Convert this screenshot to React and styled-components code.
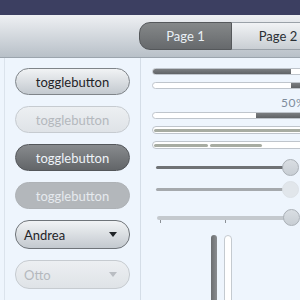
import React from "react";
import styled, { createGlobalStyle, css } from "styled-components";

const Global = createGlobalStyle`
  html, body { margin: 0; padding: 0; }
  body {
    background: #eef5fd;
    font-family: Lato, "Open Sans", sans-serif;
    overflow: hidden;
    width: 300px;
    height: 300px;
  }
`;

const Page = styled.div`
  width: 300px;
  height: 300px;
  overflow: hidden;
  display: flex;
  flex-direction: column;
`;

const TopBar = styled.div`
  height: 15px;
  flex: none;
  background: #3c3f61;
`;

const Header = styled.div`
  height: 43px;
  flex: none;
  box-sizing: border-box;
  background: linear-gradient(#eef0f3, #b8c0c8);
  border-bottom: 1px solid #9ba4ad;
  padding: 7px 0 0 139px;
  display: flex;
`;

const Tab = styled.div`
  width: 93px;
  height: 28px;
  flex: none;
  box-sizing: border-box;
  display: flex;
  align-items: center;
  justify-content: center;
  font-size: 13px;
  ${(p) =>
    p.$active
      ? css`
          background: linear-gradient(#858889, #66696c);
          color: #e9f0f6;
          border: 1px solid #55585b;
          border-radius: 11px 0 0 11px;
        `
      : css`
          background: linear-gradient(#f1f3f5, #c9ced3);
          color: #2a2f35;
          border: 1px solid #9aa1a8;
          border-left: none;
        `}
`;

const Main = styled.div`
  flex: 1;
  display: flex;
  padding-left: 4px;
  min-height: 0;
`;

const LeftPane = styled.div`
  width: 137px;
  flex: none;
  box-sizing: border-box;
  border-left: 1px solid #dbe3ec;
  border-right: 1px solid #d4dde7;
  padding: 10px 0 0 10px;
  display: flex;
  flex-direction: column;
  gap: 11px;
`;

const ToggleBtn = styled.div`
  width: 115px;
  height: 27px;
  flex: none;
  box-sizing: border-box;
  border-radius: 14px;
  display: flex;
  align-items: center;
  justify-content: center;
  font-size: 13px;
  ${(p) =>
    p.$checked
      ? p.$disabled
        ? css`
            background: #b3b7bb;
            border: 1px solid #aeb2b6;
            color: #e6eaee;
          `
        : css`
            background: linear-gradient(#888b8e, #626568);
            border: 1px solid #53565a;
            color: #eef3f8;
          `
      : p.$disabled
      ? css`
          background: linear-gradient(#eceff2, #dfe3e7);
          border: 1px solid #c6cbd0;
          color: #b4b8bd;
        `
      : css`
          background: linear-gradient(#f1f3f5, #c3c9cf);
          border: 1px solid #7f8489;
          color: #1f2327;
        `}
`;

const Combo = styled.div`
  width: 115px;
  height: 29px;
  flex: none;
  box-sizing: border-box;
  border-radius: 14px;
  display: flex;
  align-items: center;
  justify-content: space-between;
  padding: 0 12px 0 8px;
  font-size: 13px;
  ${(p) =>
    p.$disabled
      ? css`
          background: linear-gradient(#eceff2, #dfe3e7);
          border: 1px solid #c6cbd0;
          color: #b4b8bd;
        `
      : css`
          background: linear-gradient(#f1f3f5, #c3c9cf);
          border: 1px solid #6f7479;
          color: #1f2327;
        `}
`;

const Arrow = styled.span`
  width: 0;
  height: 0;
  border-left: 4.5px solid transparent;
  border-right: 4.5px solid transparent;
  border-top: 5px solid ${(p) => (p.$disabled ? "#b9bdc2" : "#1f2327")};
`;

const RightPane = styled.div`
  flex: 1;
  padding: 10px 0 0 11px;
  display: flex;
  flex-direction: column;
  min-width: 0;
`;

const Bar = styled.div`
  width: 208px;
  height: 7px;
  flex: none;
  box-sizing: border-box;
  border: 1px solid #bfc5cc;
  border-radius: 4px;
  background: #ffffff;
  overflow: hidden;
  display: flex;
  justify-content: ${(p) => (p.$inverted ? "flex-end" : "flex-start")};
  margin-top: ${(p) => p.$mt}px;
`;

const Fill = styled.div`
  height: 100%;
  background: linear-gradient(#7b7e81, #606366);
`;

const Pulse = styled.div`
  width: 208px;
  height: 8px;
  flex: none;
  box-sizing: border-box;
  border: 1px solid #bfc5cc;
  border-radius: 4px;
  background: #ffffff;
  padding: 1.5px 1px;
  display: flex;
  gap: 2px;
  margin-top: ${(p) => p.$mt}px;
`;

const PulseBlock = styled.div`
  height: 3px;
  border-radius: 2px;
  background: #a7aca2;
  flex: none;
`;

const Percent = styled.div`
  font-size: 12px;
  color: #7e8c9b;
  height: 12px;
  line-height: 12px;
  margin: 8px 0 0 129px;
  letter-spacing: 0.5px;
  white-space: nowrap;
`;

const Slider = styled.div`
  position: relative;
  width: 143px;
  height: 17px;
  margin-left: ${(p) => p.$ml ?? 4}px;
  margin-top: ${(p) => p.$mt}px;
  display: flex;
  align-items: center;
  flex: none;
`;

const Track = styled.div`
  flex: 1;
  height: ${(p) => p.$h}px;
  background: ${(p) => p.$color};
  border-radius: 2px;
  margin-right: 8px;
`;

const Knob = styled.div`
  position: absolute;
  right: 0;
  top: 0;
  width: 17px;
  height: 17px;
  box-sizing: border-box;
  border-radius: 50%;
  background: ${(p) => (p.$disabled ? "#e1e6eb" : "linear-gradient(#d9dee3, #c8ced4)")};
  border: 1px solid ${(p) => (p.$disabled ? "#dde2e7" : "#aab0b6")};
`;

const Ticks = styled.div`
  display: flex;
  gap: 64px;
  margin: -6px 0 0 8px;
  height: 4px;
  flex: none;
`;

const Tick = styled.div`
  width: 1px;
  height: 3px;
  background: #8b9096;
`;

const VertRow = styled.div`
  display: flex;
  gap: 7px;
  margin: 11px 0 0 59px;
  flex: 1;
`;

const VBar = styled.div`
  width: ${(p) => (p.$filled ? 6 : 8)}px;
  height: 80px;
  box-sizing: border-box;
  border-radius: 4px;
  ${(p) =>
    p.$filled
      ? css`
          background: linear-gradient(90deg, #6b6e71, #8a8d90);
        `
      : css`
          background: #ffffff;
          border: 1px solid #c4cad0;
        `}
`;

export default function App() {
  return (
    <Page>
      <Global />
      <TopBar />
      <Header>
        <Tab $active>Page 1</Tab>
        <Tab>Page 2</Tab>
      </Header>
      <Main>
        <LeftPane>
          <ToggleBtn>togglebutton</ToggleBtn>
          <ToggleBtn $disabled>togglebutton</ToggleBtn>
          <ToggleBtn $checked>togglebutton</ToggleBtn>
          <ToggleBtn $checked $disabled>togglebutton</ToggleBtn>
          <Combo>
            Andrea
            <Arrow />
          </Combo>
          <Combo $disabled>
            Otto
            <Arrow $disabled />
          </Combo>
        </LeftPane>
        <RightPane>
          <Bar $mt={0}>
            <Fill style={{ width: "67%" }} />
          </Bar>
          <Bar $mt={7} $inverted>
            <Fill style={{ width: "33%" }} />
          </Bar>
          <Percent>50%</Percent>
          <Bar $mt={3} $inverted>
            <Fill style={{ width: "50%" }} />
          </Bar>
          <Pulse $mt={7}>
            <PulseBlock style={{ width: "100%" }} />
          </Pulse>
          <Pulse $mt={7}>
            <PulseBlock style={{ width: "54px" }} />
            <PulseBlock style={{ width: "52px" }} />
          </Pulse>
          <Slider $mt={10}>
            <Track $h={3} $color="#6f7275" />
            <Knob />
          </Slider>
          <Slider $mt={5}>
            <Track $h={3} $color="#a5a9ad" />
            <Knob $disabled />
          </Slider>
          <Slider $mt={11} $ml={5}>
            <Track $h={4} $color="#c4c9ce" />
            <Knob />
          </Slider>
          <Ticks>
            <Tick />
            <Tick />
          </Ticks>
          <VertRow>
            <VBar $filled />
            <VBar />
          </VertRow>
        </RightPane>
      </Main>
    </Page>
  );
}
